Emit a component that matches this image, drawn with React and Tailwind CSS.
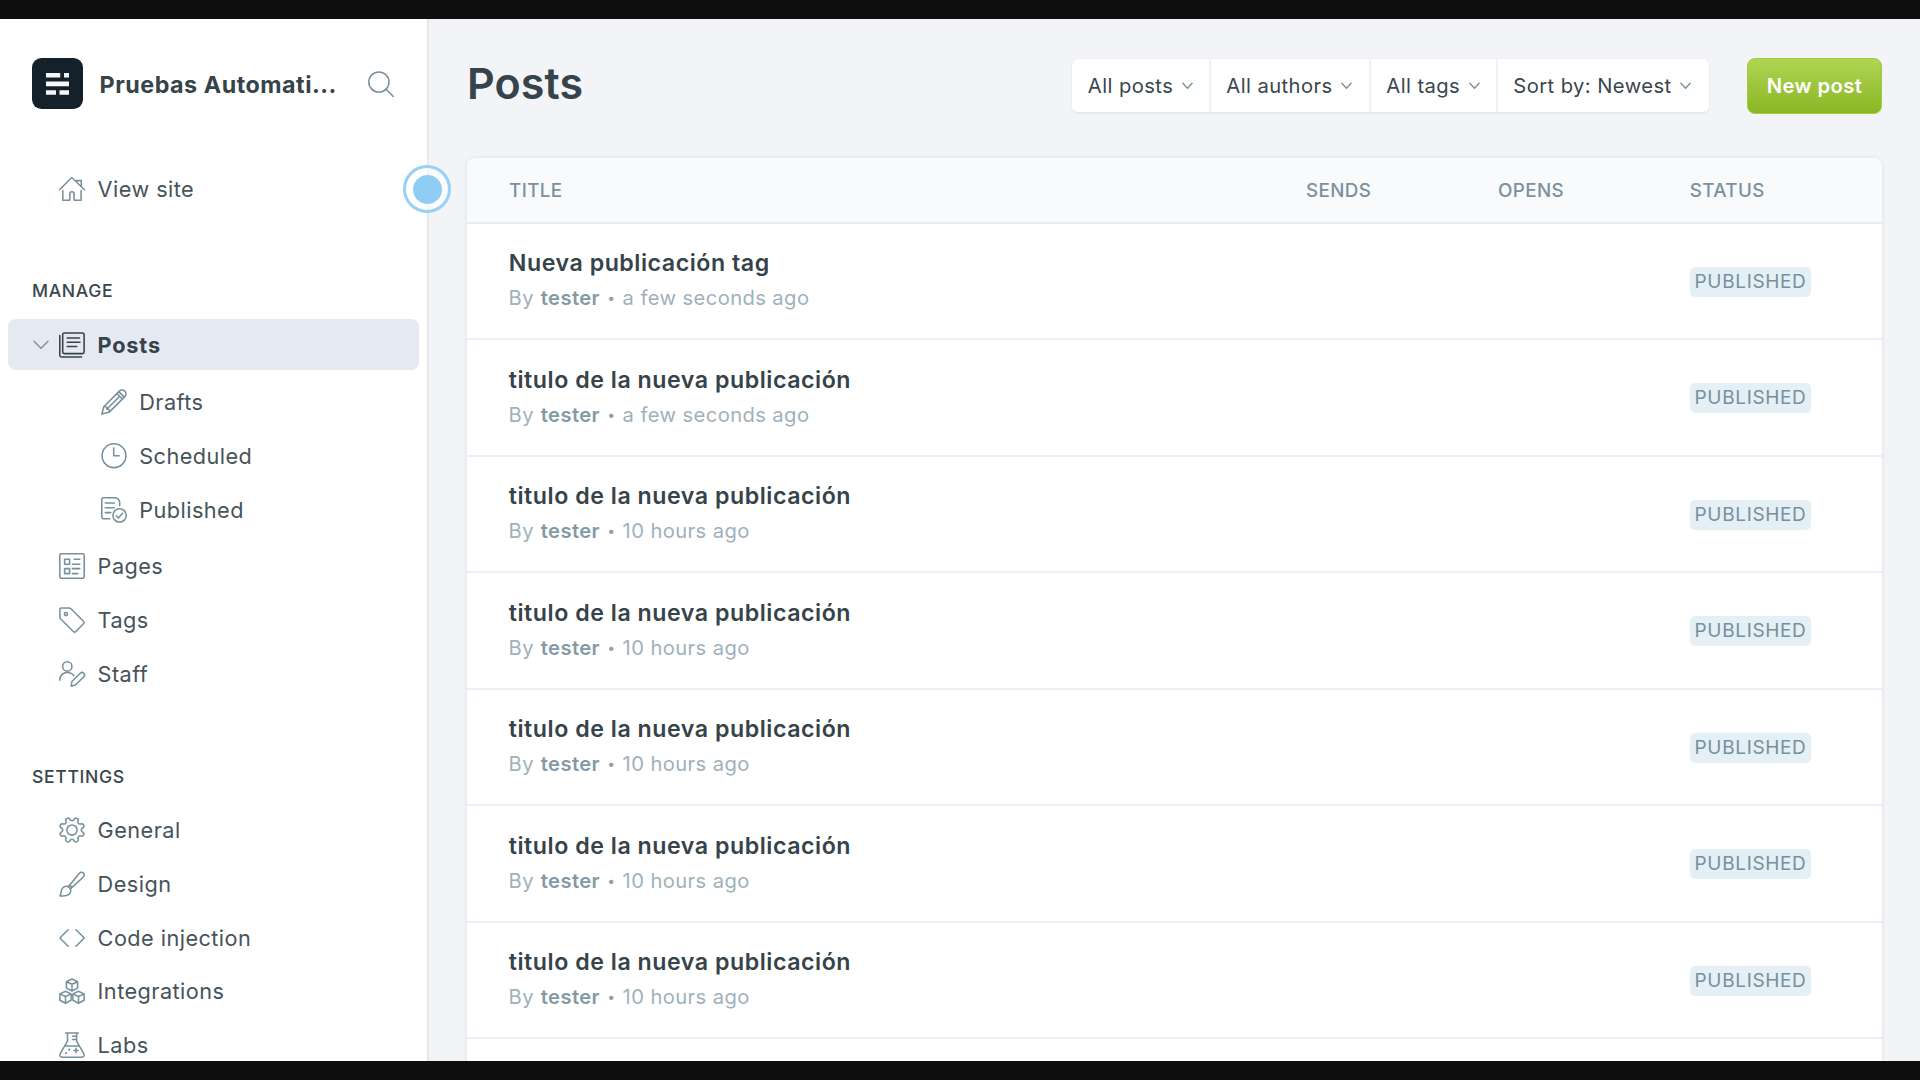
import React from "react";

const gearPath = (() => {
  const pts = [];
  for (let i = 0; i < 160; i++) {
    const a = (i / 160) * Math.PI * 2;
    const r = 11 + 1.65 * Math.tanh(2 * Math.cos(8 * a - Math.PI));
    pts.push(`${(13 + r * Math.sin(a)).toFixed(2)} ${(13 - r * Math.cos(a)).toFixed(2)}`);
  }
  return `M${pts.join("L")}Z`;
})();

const cube = (x, y) =>
  `M${x} ${y - 6}l5.6 2.7v6.4l-5.6 2.9l-5.6-2.9v-6.4zM${x - 5.6} ${y - 3.3}l5.6 2.6l5.6-2.6M${x} ${y - 0.7}v6.7`;

const ICONS = {
  home: (
    <path d="M.6 13.8 12 2.2a1.1 1.1 0 0 1 1.6 0L25.4 13.8M3.8 14.6v9.6h7v-6.4a2.1 2.1 0 0 1 4.3 0v6.4h7v-9.6M17.3 4.6h5v5.6" />
  ),
  posts: (
    <>
      <rect x="3.7" y="0.9" width="21.4" height="20.7" rx="1.6" />
      <path d="M.8 3.6v19.6a1.7 1.7 0 0 0 1.7 1.7h20M8.2 6h12.2M8.2 10.3h12.8M8.2 14.5h9.6" />
    </>
  ),
  pencil: (
    <path d="M.9 25.1 2.8 17.7 18.3 2.1a3.8 3.8 0 0 1 5.5 0 3.8 3.8 0 0 1 0 5.5L8.3 23.1zM2.8 17.7c2.2-.5 3.1.3 3 2.5 2.2-.1 3 .7 2.5 2.9M15.9 4.5l5.5 5.5M17.8 2.6l5.5 5.5M5.8 20.2 18.700 7.300" />
  ),
  clock: (
    <>
      <circle cx="13" cy="12.7" r="11.9" />
      <path d="M12.7 5v7.8h5.6" />
    </>
  ),
  published: (
    <>
      <path d="M8.8 21.7H2.3A1.5 1.5 0 0 1 .8 20.2V2.3A1.5 1.5 0 0 1 2.3.8h12.2c2.4.7 4 2.4 4.2 4.6v3.2M4.3 5.9h9.2M4.3 10.7h9M4.3 15.6h5.4" />
      <circle cx="18.6" cy="18.4" r="6.7" />
      <path d="m15.2 18.8 2.2 2.2 4.2-4.8" />
    </>
  ),
  pages: (
    <>
      <rect x="0.8" y="0.8" width="24.4" height="24.4" rx="1.4" />
      <path d="M5.6 6.2h5v5h-5zM5.6 15.6h5v5h-5zM15.2 6.2h5.6M13.4 11.3h7.4M13.4 15.6h7.4M13.4 20.6h5.4" />
    </>
  ),
  tag: (
    <>
      <path d="M.9 2.4A1.5 1.5 0 0 1 2.4.9h7.4a3 3 0 0 1 2.1.9L24.7 14.5a1.4 1.4 0 0 1 0 2L16.6 24.7a1.4 1.4 0 0 1-2 0L1.8 12a3 3 0 0 1-.9-2.1z" />
      <circle cx="7" cy="7" r="1.6" />
    </>
  ),
  staff: (
    <path d="M8.3.8a4.6 4.6 0 0 1 0 9.3 4.6 4.6 0 0 1 0-9.3zM.7 19.2c0-4.6 3.2-7.7 7.6-7.7 2.8 0 5.1 1.2 6.5 3.2M12.2 25.2l.7-4.7 8.4-8.3a2.5 2.5 0 0 1 3.5 0 2.5 2.5 0 0 1 0 3.5L16.5 24z" />
  ),
  gear: (
    <>
      <path d={gearPath} />
      <circle cx="13" cy="13" r="5.1" />
    </>
  ),
  brush: (
    <path d="M10.6 14.2 20.4 2.2a2.9 2.9 0 0 1 4.1-.3 2.9 2.9 0 0 1-.2 4.1L12.8 16.6M9 15.4l1.6-1.2c1.1.6 1.9 1.4 2.2 2.4l-1.5 1.5M.9 24.9c1.4-1.3 1-3.6 1.6-5.8.8-3 4-4.6 6.6-3.4 2.7 1.3 3.5 4.5 1.6 6.9C8.6 25.2 4.6 25.3.9 24.9z" />
  ),
  code: <path d="M9.2 4.7.9 13l8.3 8.3M17 4.7 25.3 13 17 21.3" />,
  cubes: <path d={cube(13, 7) + cube(6.5, 19.2) + cube(19.5, 19.2)} />,
  flask: (
    <>
      <path d="M6.6.9h12.8M8.5.9v8.3L1.2 21.6c-1 2 0 3.7 2.2 3.7h19.2c2.2 0 3.2-1.7 2.2-3.7L17.6 9.2V.9M13.5 4.2h4M13.5 7.5h4M5.6 14h14.9M17 16.3v4.4M14.8 18.5h4.4" />
      <path d="M10.2 17.6v.2M7 21.1v.2" strokeWidth="2" />
    </>
  ),
};

function Icon({ name, className = "text-[#78909c]" }) {
  return (
    <svg viewBox="0 0 26 26" className={`h-[26px] w-[26px] shrink-0 overflow-visible ${className}`} fill="none" stroke="currentColor" strokeWidth="1.55" strokeLinecap="round" strokeLinejoin="round">
      {ICONS[name]}
    </svg>
  );
}

function NavItem({ icon, label }) {
  return (
    <li className="flex h-[53.75px] items-center gap-[12.6px] pl-[59px]">
      <Icon name={icon} />
      <span>{label}</span>
    </li>
  );
}

function SubItem({ icon, label }) {
  return (
    <li className="flex h-[53.75px] items-center gap-[12.2px] pl-[101px]">
      <Icon name={icon} />
      <span>{label}</span>
    </li>
  );
}

function SectionLabel({ children }) {
  return <h2 className="h-5 pl-8 text-[17.6px] leading-[22px] font-medium tracking-[0.65px] text-[#3a464c]">{children}</h2>;
}

function Sidebar() {
  return (
    <aside className="w-[429px] shrink-0 overflow-hidden border-r-2 border-[#e6e8ee] bg-white pt-[39px] text-[21.7px] leading-8 tracking-[0.45px] text-[#46535a]">
      <div className="flex h-[51px] items-center pl-8">
        <svg viewBox="0 0 51 51" className="h-[51px] w-[51px] shrink-0">
          <rect width="51" height="51" rx="9.5" fill="#15212a" />
          <path fill="#f4f6f7" d="M14 15h14.2v4.5H14zM32 15h5v4.5h-5zM14 23.5h23v4.7H14zM14 32.2h10v4.6H14zM27.500 32.200H37v4.600h-9.500z" />
        </svg>
        <span className="ml-[16.6px] flex-1 pt-[3px] text-[23.3px] font-bold tracking-[0.52px] text-[#36434a]">Pruebas Automati...</span>
        <svg viewBox="0 0 26 26" className="mr-[33px] h-[26px] w-[26px]" fill="none" stroke="#78909c" strokeWidth="1.5" strokeLinecap="round">
          <circle cx="10.9" cy="11" r="10.1" />
          <path d="m18.2 18.3 7.1 7.2" />
        </svg>
      </div>

      <ul className="mt-[53px]">
        <NavItem icon="home" label="View site" />
      </ul>

      <div className="mt-[64.7px]">
        <SectionLabel>MANAGE</SectionLabel>
        <ul className="mt-[18.5px]">
          <li className="mx-2 flex h-[51.5px] items-center rounded-lg bg-[#e5eaf2] pl-[25px] font-bold text-[#36434a]">
            <svg viewBox="0 0 16 10" className="h-[10px] w-4" fill="none" stroke="#78909c" strokeWidth="1.4" strokeLinecap="round" strokeLinejoin="round">
              <path d="m1 1.2 7 7 7-7" />
            </svg>
            <span className="ml-[10px] flex items-center gap-[12.6px]">
              <Icon name="posts" className="text-[#36434a]" />
              <span className="tracking-[0.8px]">Posts</span>
            </span>
          </li>
          <li>
            <ul className="mt-[5px] mb-[2.9px]">
              <SubItem icon="pencil" label="Drafts" />
              <SubItem icon="clock" label="Scheduled" />
              <SubItem icon="published" label="Published" />
            </ul>
          </li>
          <NavItem icon="pages" label="Pages" />
          <NavItem icon="tag" label="Tags" />
          <NavItem icon="staff" label="Staff" />
        </ul>
      </div>

      <div className="mt-[65.4px]">
        <SectionLabel>SETTINGS</SectionLabel>
        <ul className="mt-[17.1px]">
          <NavItem icon="gear" label="General" />
          <NavItem icon="brush" label="Design" />
          <NavItem icon="code" label="Code injection" />
          <NavItem icon="cubes" label="Integrations" />
          <NavItem icon="flask" label="Labs" />
        </ul>
      </div>
    </aside>
  );
}

const FILTERS = [
  { label: "All posts", width: 138.5 },
  { label: "All authors", width: 160 },
  { label: "All tags", width: 127 },
  { label: "Sort by: Newest", width: 211.5 },
];

const POSTS = [
  ["Nueva publicación tag", "a few seconds ago"],
  ["titulo de la nueva publicación", "a few seconds ago"],
  ["titulo de la nueva publicación", "10 hours ago"],
  ["titulo de la nueva publicación", "10 hours ago"],
  ["titulo de la nueva publicación", "10 hours ago"],
  ["titulo de la nueva publicación", "10 hours ago"],
  ["titulo de la nueva publicación", "10 hours ago"],
];

function Header() {
  return (
    <header className="flex h-[57px] items-center">
      <h1 className="flex-1 pb-[6px] text-[43px] leading-[52px] font-semibold tracking-[0.1px] text-[#36434a]">Posts</h1>
      <div className="flex h-[53px] rounded-md bg-white text-[20.2px] tracking-[0.43px] text-[#3a464c] shadow-[0_1px_3px_rgba(0,0,0,0.08)]">
        {FILTERS.map(({ label, width }) => (
          <button key={label} className="flex items-center border-r-2 border-[#f0f2f5] pt-px pl-[15.8px] whitespace-nowrap last:border-r-0" style={{ width }}>
            {label}
            <svg viewBox="0 0 11 8" className="ml-[8.8px] h-2 w-[11px]" fill="none" stroke="#78909c" strokeWidth="1.4" strokeLinecap="round" strokeLinejoin="round">
              <path d="M.9 1.2 5.5 6.2 10.1 1.2" />
            </svg>
          </button>
        ))}
      </div>
      <button className="ml-[38px] h-[56px] w-[135px] rounded-lg border border-[#a0cb3c] bg-linear-to-b from-[#afd551] to-[#8ab624] pt-px text-[20.3px] font-semibold tracking-[0.35px] whitespace-nowrap text-white">
        New post
      </button>
    </header>
  );
}

function PostRow({ title, time }) {
  return (
    <li className="grid h-[116.5px] grid-cols-[1182px_1fr] border-b-2 border-[#e7f0f6] pl-[41px]">
      <div className="pt-[22.6px]">
        <h3 className="pl-[0.8px] text-[23.2px] leading-[34px] font-semibold tracking-[0.53px] text-[#36434a]">{title}</h3>
        <p className="flex pl-[0.6px] text-[20.2px] leading-[35px] tracking-[0.4px] text-[#a0b1ba]">
          <span>By</span>
          <strong className="ml-[6.8px] font-semibold text-[#839aa6]">tester</strong>
          <span className="w-[22.6px] text-center text-[14px] text-[#8da1ab]">•</span>
          <span>{time}</span>
        </p>
      </div>
      <div className="flex items-center pt-[1px]">
        <span className="flex h-[30px] w-[121px] items-center justify-center rounded-[5px] bg-[#e5eff6] pt-px text-[19px] tracking-[0.65px] text-[#78909c]">PUBLISHED</span>
      </div>
    </li>
  );
}

export default function App() {
  return (
    <div className="relative flex h-[1080px] w-[1920px] flex-col overflow-hidden bg-[#0e0e0e] py-[19px] font-['Inter',sans-serif]">
      <div className="flex min-h-0 flex-1 bg-[#f2f4f8]">
        <Sidebar />
        <main className="flex min-w-0 flex-1 flex-col overflow-hidden pt-[38px] pr-[38px] pl-[38px]">
          <Header />
          <section className="mt-[44.4px] min-h-0 flex-1 rounded-t-lg bg-white shadow-[0_0_4px_rgba(0,0,0,0.10)]">
            <div className="grid h-[65.4px] grid-cols-[797px_192px_191.7px_1fr] items-center rounded-t-lg border-b-2 border-[#e3edf4] bg-[#f9fafc] pt-[2px] pl-[42px] text-[18.8px] font-medium tracking-[0.38px] text-[#7b919c]">
              <span>TITLE</span>
              <span>SENDS</span>
              <span>OPENS</span>
              <span>STATUS</span>
            </div>
            <ul>
              {POSTS.map(([title, time], i) => (
                <PostRow key={i} title={title} time={time} />
              ))}
            </ul>
          </section>
        </main>
      </div>

      <div className="absolute top-[165px] left-[403px] flex h-12 w-12 items-center justify-center rounded-full border-[3px] border-[#97d1f5] bg-white/60">
        <div className="h-[29px] w-[29px] rounded-full bg-[#90cdf4]" />
      </div>
    </div>
  );
}
